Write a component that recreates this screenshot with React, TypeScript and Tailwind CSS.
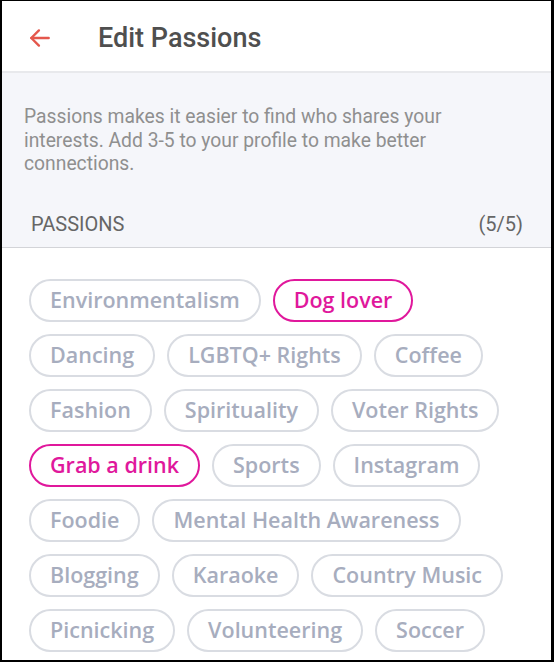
import React from "react";

type Chip = { label: string; selected?: boolean };

const rows: Chip[][] = [
  [{ label: "Environmentalism" }, { label: "Dog lover", selected: true }],
  [{ label: "Dancing" }, { label: "LGBTQ+ Rights" }, { label: "Coffee" }],
  [{ label: "Fashion" }, { label: "Spirituality" }, { label: "Voter Rights" }],
  [{ label: "Grab a drink", selected: true }, { label: "Sports" }, { label: "Instagram" }],
  [{ label: "Foodie" }, { label: "Mental Health Awareness" }],
  [{ label: "Blogging" }, { label: "Karaoke" }, { label: "Country Music" }],
  [{ label: "Picnicking" }, { label: "Volunteering" }, { label: "Soccer" }],
];

function PassionChip({ label, selected }: Chip) {
  return (
    <div
      className={
        selected
          ? "h-[43px] px-[19px] flex items-center rounded-full border-2 border-[#e0189c] text-[#e0189c] bg-white"
          : "h-[43px] px-[19px] flex items-center rounded-full border-2 border-[#d9dce2] text-[#a7adbe] bg-white"
      }
    >
      <span className="text-[21.5px] font-semibold leading-none whitespace-nowrap" style={{ fontFamily: '"Open Sans", sans-serif' }}>
        {label}
      </span>
    </div>
  );
}

export default function App() {
  return (
    <div
      className="w-[554px] h-[662px] overflow-hidden bg-white border-solid border-black border-t border-l-2 border-r-[3px] border-b-2 flex flex-col"
      style={{ fontFamily: "Roboto, sans-serif" }}
    >
      <div className="h-[72px] shrink-0 flex items-center pt-[4px] bg-white border-b-2 border-[#e8e9ec]">
        <div className="pl-[25px] w-[96px] flex items-center">
          <svg width="26" height="26" viewBox="0 0 24 24" fill="none" stroke="#e4574c" strokeWidth="2.2" strokeLinecap="round" strokeLinejoin="round">
            <path d="M20 12H4" />
            <path d="M11 5l-7 7 7 7" />
          </svg>
        </div>
        <div className="text-[27px] font-medium text-[#4f4f4f] leading-none">Edit Passions</div>
      </div>

      <div className="shrink-0 bg-[#f5f6fa] border-b border-[#d3d4d8]">
        <p className="pt-[32px] pl-[22px] pr-[16px] text-[19.3px] leading-[23.5px] text-[#8f8f8f]">
          Passions makes it easier to find who shares your
          <br />
          interests. Add 3-5 to your profile to make better
          <br />
          connections.
        </p>
        <div className="mt-[36px] pb-[11px] pl-[29px] pr-[28px] flex justify-between text-[20px] leading-[24px] text-[#666666]">
          <span>PASSIONS</span>
          <span>(5/5)</span>
        </div>
      </div>

      <div className="pt-[31px] pl-[27px] flex flex-col gap-[12px]">
        {rows.map((row, i) => (
          <div key={i} className="flex gap-[12px]">
            {row.map((c) => (
              <PassionChip key={c.label} {...c} />
            ))}
          </div>
        ))}
      </div>
    </div>
  );
}
